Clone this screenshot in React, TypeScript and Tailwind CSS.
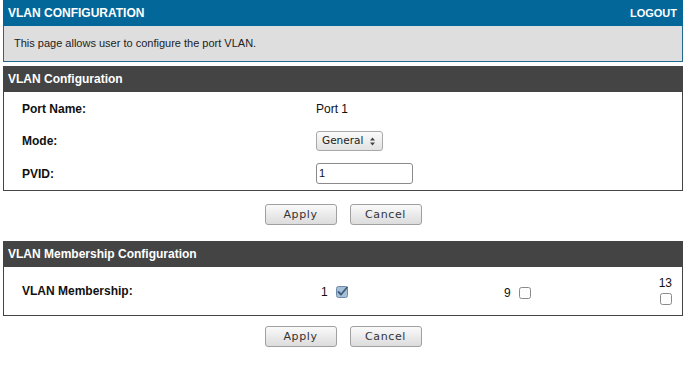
import React from "react";

const ui = { fontFamily: '"DejaVu Sans", "Liberation Sans", sans-serif' };
const sans = { fontFamily: '"Liberation Sans", Arial, sans-serif' };

function Btn({ label }: { label: string }) {
  return (
    <button
      style={ui}
      className="h-[21px] w-[72px] rounded-[3px] border border-[#a0a0a0] bg-gradient-to-b from-[#fafafa] to-[#dcdcdc] text-[11px] tracking-[0.6px] text-[#333] leading-none"
    >
      {label}
    </button>
  );
}

function Check({ checked }: { checked?: boolean }) {
  return (
    <svg width="12" height="12" viewBox="0 0 12 12" className="block">
      <rect
        x="0.5"
        y="0.5"
        width="11"
        height="11"
        rx="2"
        fill={checked ? "#a7bfd6" : "#fdfdfd"}
        stroke={checked ? "#6d8aa8" : "#8a8a8a"}
      />
      {checked && (
        <path d="M2.5 6 L5 8.5 L11 1.5" fill="none" stroke="#3c5a7a" strokeWidth="1.8" strokeLinecap="round" strokeLinejoin="round" />
      )}
    </svg>
  );
}

export default function App() {
  return (
    <div style={sans} className="w-[687px] h-[373px] bg-white pl-[3px] pr-[4px] text-[#111]">
      {/* top bar */}
      <div className="h-[26px] bg-[#03679a] flex items-center justify-between pl-[5px] pr-[6px] text-white font-bold">
        <span className="text-[12px]">VLAN CONFIGURATION</span>
        <span className="text-[11px]">LOGOUT</span>
      </div>
      <div className="h-[36px] bg-[#dedede] border border-t-0 border-[#1f6a93] flex items-center pl-[10px] text-[11px] text-[#222]">
        This page allows user to configure the port VLAN.
      </div>

      {/* VLAN Configuration */}
      <div className="mt-[4px]">
        <div className="h-[26px] bg-[#444444] flex items-center px-[5px] text-white font-bold text-[12px]">
          VLAN Configuration
        </div>
        <div className="border border-t-0 border-[#444] h-[99px] flex flex-col pt-[1px] text-[12px]">
          <div className="h-[32px] flex items-center">
            <div className="w-[312px] pl-[18px] font-bold">Port Name:</div>
            <div>Port 1</div>
          </div>
          <div className="h-[32px] flex items-center">
            <div className="w-[312px] pl-[18px] font-bold">Mode:</div>
            <div
              style={ui}
              className="h-[20px] w-[67px] rounded-[3px] border border-[#a8a8a8] bg-gradient-to-b from-[#fbfbfb] to-[#e2e2e2] flex items-center justify-between pl-[5px] pr-[6px] text-[10.5px] text-[#222]"
            >
              <span>General</span>
              <svg width="7" height="11" viewBox="0 0 7 11">
                <path d="M3.5 1.5 L6 4.5 L1 4.5 Z" fill="#444" />
                <path d="M3.5 9.5 L6 6.5 L1 6.5 Z" fill="#444" />
              </svg>
            </div>
          </div>
          <div className="h-[33px] flex items-center">
            <div className="w-[312px] pl-[18px] font-bold">PVID:</div>
            <div className="h-[21px] w-[97px] rounded-[3px] border border-[#8a8a8a] bg-white flex items-center pl-[2px] text-[11px]">
              1
            </div>
          </div>
        </div>
      </div>

      <div className="flex justify-center gap-[13px] mt-[13px]">
        <Btn label="Apply" />
        <Btn label="Cancel" />
      </div>

      {/* VLAN Membership */}
      <div className="mt-[16px]">
        <div className="h-[26px] bg-[#444444] flex items-center px-[5px] text-white font-bold text-[12px]">
          VLAN Membership Configuration
        </div>
        <div className="border border-t-0 border-[#444] h-[49px] flex items-center text-[12px]">
          <div className="w-[317px] pl-[18px] font-bold">VLAN Membership:</div>
          <div className="w-[183px] flex items-center gap-[8px] pt-[2px]">
            <span>1</span>
            <Check checked />
          </div>
          <div className="w-[149px] flex items-center gap-[8px] pt-[4px]">
            <span>9</span>
            <Check />
          </div>
          <div className="flex flex-col items-end w-[19px]">
            <span className="leading-none">13</span>
            <div className="mt-[4px]">
              <Check />
            </div>
          </div>
        </div>
      </div>

      <div className="flex justify-center gap-[13px] mt-[10px]">
        <Btn label="Apply" />
        <Btn label="Cancel" />
      </div>
    </div>
  );
}
